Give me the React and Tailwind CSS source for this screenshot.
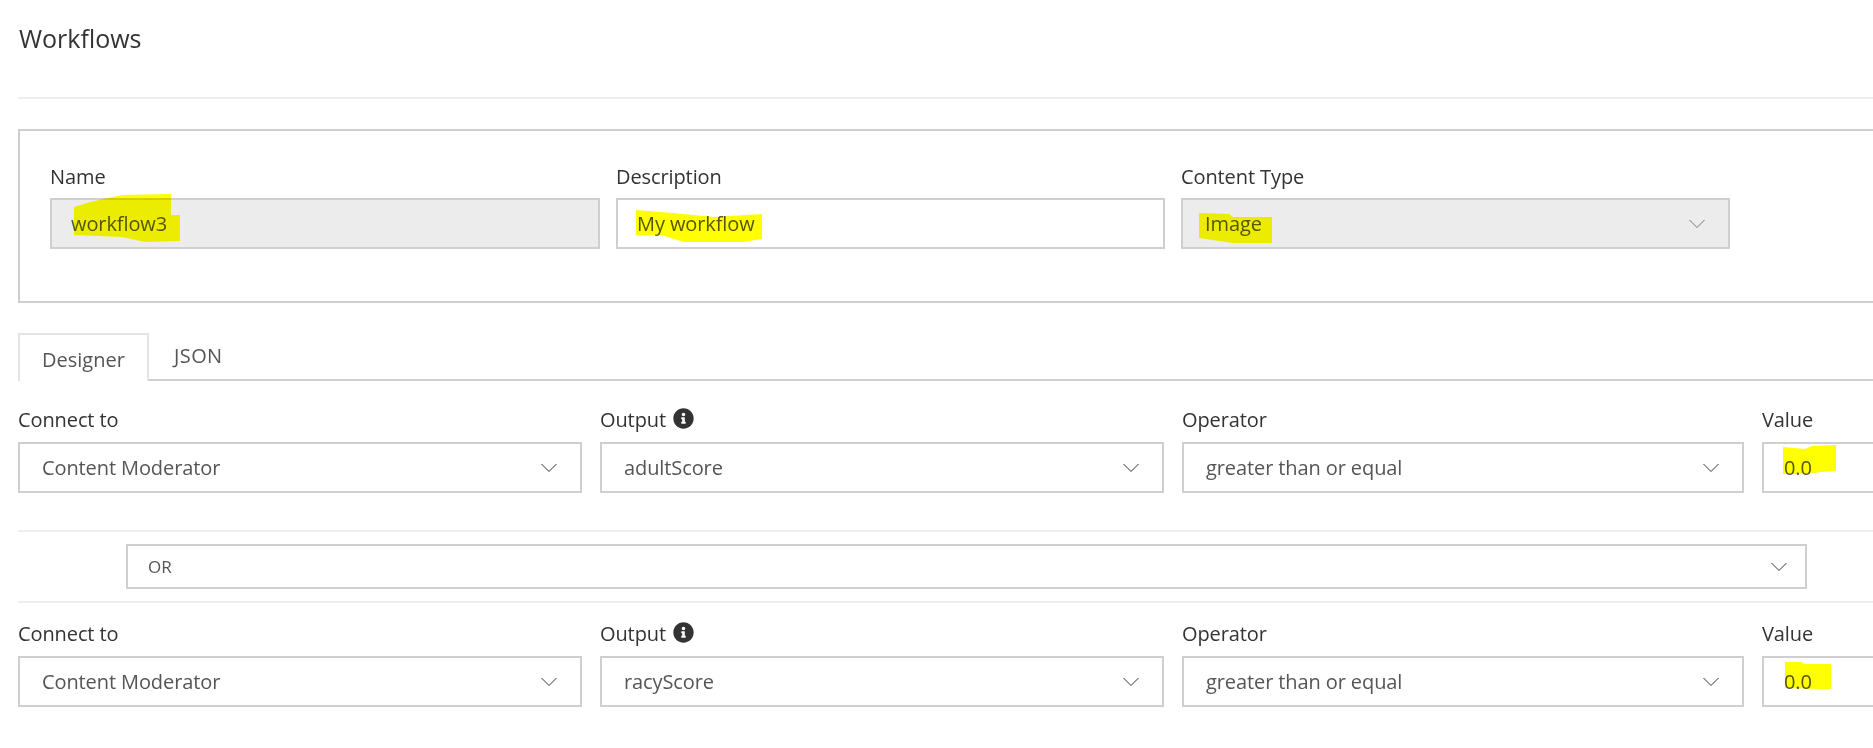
import React from 'react';
import { FaInfoCircle } from 'react-icons/fa';

const Chevron = ({ tone = 'stroke-[#333]' }) => (
  <svg width="16" height="10" viewBox="0 0 16 10" className={`shrink-0 fill-none ${tone}`}>
    <polyline points="0.5,1 8,8.5 15.5,1" strokeWidth="1" />
  </svg>
);

// one box: a text input or a select look-alike
function Box({ value, chevron, disabled, className = '', chevronTone, textClass = 'text-[20px] tracking-[-0.1px]' }) {
  return (
    <div
      className={`flex items-center justify-between border-2 border-[#cfcfcf] ${
        disabled ? 'bg-[#ececec]' : 'bg-white'
      } ${className}`}
    >
      <span className={`text-[#555] ${textClass}`}>{value}</span>
      {chevron && <Chevron tone={chevronTone} />}
    </div>
  );
}

function Label({ children, info }) {
  return (
    <div className="flex items-center gap-[7px] h-[22px] text-[20px] text-[#333] tracking-[-0.1px]">
      {children}
      {info && <FaInfoCircle className="text-[#333] text-[21px] -mt-[4px]" />}
    </div>
  );
}

function ConditionRow({ output }) {
  return (
    <div className="flex gap-[18px]">
      <div className="w-[564px] shrink-0 flex flex-col gap-[11px]">
        <Label>Connect to</Label>
        <Box value="Content Moderator" chevron className="h-[51px] pl-[22px] pr-[23px]" />
      </div>
      <div className="w-[564px] shrink-0 flex flex-col gap-[11px]">
        <Label info>Output</Label>
        <Box value={output} chevron className="h-[51px] pl-[22px] pr-[23px]" />
      </div>
      <div className="w-[562px] shrink-0 flex flex-col gap-[11px]">
        <Label>Operator</Label>
        <Box value="greater than or equal" chevron className="h-[51px] pl-[22px] pr-[23px]" />
      </div>
      <div className="w-[140px] shrink-0 flex flex-col gap-[11px]">
        <Label>Value</Label>
        <Box value="0.0" className="h-[51px] pl-[20px]" />
      </div>
    </div>
  );
}

// marker-pen strokes somebody drew over the screenshot
function Highlights() {
  return (
    <svg viewBox="0 0 1873 748" className="absolute inset-0 w-full h-full pointer-events-none mix-blend-multiply">
      <g fill="#ffff00">
        <polygon points="74,207 90,202 122,195 171,194 171,215 180,215 180,241 145,242 122,237 98,236 74,235" />
        <polygon points="636,210 673,213 714,217 762,214 762,239 743,242 684,242 661,235 636,235" />
        <polygon points="1199,213 1229,214 1233,217 1272,217 1272,243 1233,243 1199,238" />
        <polygon points="1783,447 1805,449 1812,446 1836,445 1836,471 1820,472 1815,473 1783,474" />
        <polygon points="1785,662 1802,662 1803,664 1831,664 1831,689 1820,689 1785,688" />
      </g>
    </svg>
  );
}

export default function App() {
  return (
    <div className="relative w-[1873px] h-[748px] overflow-hidden bg-white pl-[18px] font-['Open_Sans',sans-serif]">
      <h1 className="pl-[1px] pt-[22px] h-[97px] text-[25px] leading-[32px] font-normal text-[#333]">Workflows</h1>
      <div className="h-[2px] bg-[#eeeeee]" />

      {/* Workflow details */}
      <div className="mt-[30px] w-[1900px] h-[174px] border-2 border-[#cfcfcf] pl-[30px] pt-[35px]">
        <div className="flex gap-[16px]">
          <div className="w-[550px] flex flex-col gap-[10px]">
            <Label>Name</Label>
            <Box value="workflow3" disabled className="h-[51px] pl-[19px]" />
          </div>
          <div className="w-[549px] flex flex-col gap-[10px]">
            <Label>Description</Label>
            <Box value="My workflow" className="h-[51px] pl-[19px]" />
          </div>
          <div className="w-[549px] flex flex-col gap-[10px]">
            <Label>Content Type</Label>
            <Box value="Image" chevron disabled chevronTone="stroke-[#777]" className="h-[51px] pl-[22px] pr-[23px]" />
          </div>
        </div>
      </div>

      {/* Tabs */}
      <div className="mt-[30px] flex h-[48px] border-b-2 border-[#cfcfcf]">
        <div className="w-[131px] h-[48px] pl-[22px] pt-[13px] border-2 border-b-0 border-[#e4e4e4] bg-white text-[20px] leading-[24px] text-[#555]">
          Designer
        </div>
        <div className="pl-[25px] pt-[11px] text-[20px] leading-[24px] tracking-[0.4px] text-[#555]">JSON</div>
      </div>

      <div className="mt-[28px]">
        <ConditionRow output="adultScore" />
      </div>

      <div className="mt-[37px] h-[2px] bg-[#eeeeee]" />
      <div className="pl-[108px] pt-[12px] pb-[12px]">
        <Box value="OR" chevron className="w-[1681px] h-[45px] pl-[20px] pr-[18px]" textClass="text-[17px]" />
      </div>
      <div className="h-[2px] bg-[#eeeeee]" />

      <div className="mt-[20px]">
        <ConditionRow output="racyScore" />
      </div>

      <Highlights />
    </div>
  );
}
